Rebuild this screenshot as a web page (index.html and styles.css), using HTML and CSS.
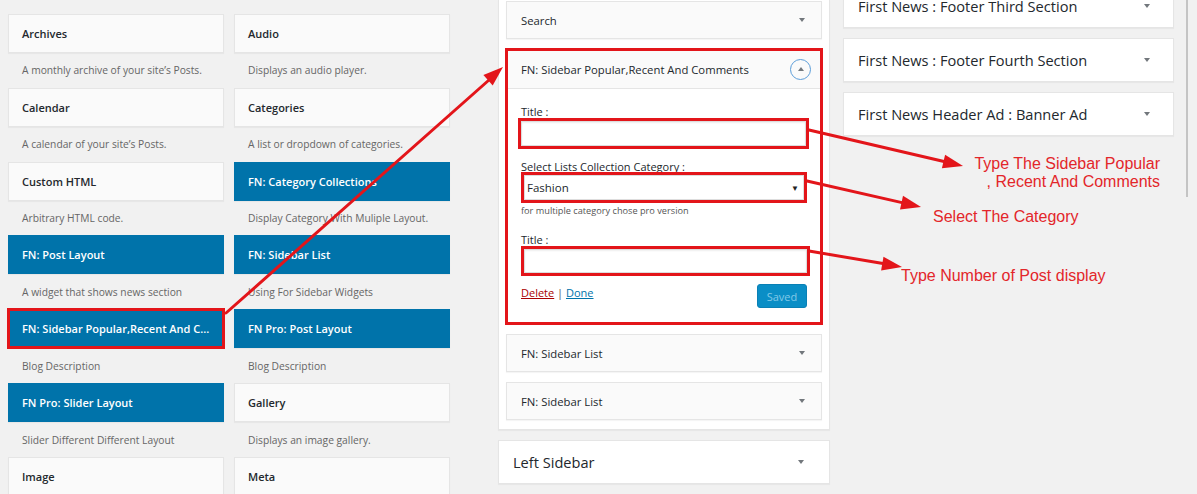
FILE: index.html
```html
<!DOCTYPE html>
<html>
<head>
<meta charset="utf-8">
<title>Widgets</title>
<link rel="stylesheet" href="styles.css">
</head>
<body>
<div class="page">
  <div class="available">
    <div class="item"><div class="card">Archives</div><div class="desc">A monthly archive of your site’s Posts.</div></div>
    <div class="item"><div class="card">Audio</div><div class="desc">Displays an audio player.</div></div>
    <div class="item"><div class="card">Calendar</div><div class="desc">A calendar of your site’s Posts.</div></div>
    <div class="item"><div class="card">Categories</div><div class="desc">A list or dropdown of categories.</div></div>
    <div class="item"><div class="card">Custom HTML</div><div class="desc">Arbitrary HTML code.</div></div>
    <div class="item"><div class="card blue">FN: Category Collections</div><div class="desc">Display Category With Muliple Layout.</div></div>
    <div class="item"><div class="card blue">FN: Post Layout</div><div class="desc">A widget that shows news section</div></div>
    <div class="item"><div class="card blue">FN: Sidebar List</div><div class="desc">Using For Sidebar Widgets</div></div>
    <div class="item"><div class="card blue marked">FN: Sidebar Popular,Recent And C...</div><div class="desc">Blog Description</div></div>
    <div class="item"><div class="card blue">FN Pro: Post Layout</div><div class="desc">Blog Description</div></div>
    <div class="item"><div class="card blue">FN Pro: Slider Layout</div><div class="desc">Slider Different Different Layout</div></div>
    <div class="item"><div class="card">Gallery</div><div class="desc">Displays an image gallery.</div></div>
    <div class="item"><div class="card">Image</div><div class="desc"></div></div>
    <div class="item"><div class="card">Meta</div><div class="desc"></div></div>
  </div>

  <div class="sidebar-col">
    <div class="sidebar-open">
      <div class="w">
        <div class="w-top"><span>Search</span><span class="tri"></span></div>
      </div>
      <div class="w expanded marked">
        <div class="w-top head"><span>FN: Sidebar Popular,Recent And Comments</span><span class="circle"><span class="tri up"></span></span></div>
        <div class="w-body">
          <div class="lbl">Title :</div>
          <div class="field boxed"></div>
          <div class="lbl gap1">Select Lists Collection Category :</div>
          <div class="select boxed"><span>Fashion</span><span class="caret">▼</span></div>
          <div class="help">for multiple category chose pro version</div>
          <div class="lbl gap2">Title :</div>
          <div class="field field2 boxed"></div>
          <div class="actions">
            <div class="links"><span class="del">Delete</span> <span class="sep">|</span> <span class="done">Done</span></div>
            <div class="saved">Saved</div>
          </div>
        </div>
      </div>
      <div class="w">
        <div class="w-top"><span>FN: Sidebar List</span><span class="tri"></span></div>
      </div>
      <div class="w">
        <div class="w-top"><span>FN: Sidebar List</span><span class="tri"></span></div>
      </div>
    </div>
    <div class="sidebar-closed"><span>Left Sidebar</span><span class="tri"></span></div>
  </div>

  <div class="right-col">
    <div class="rcard"><span>First News : Footer Third Section</span><span class="tri"></span></div>
    <div class="rcard"><span>First News : Footer Fourth Section</span><span class="tri"></span></div>
    <div class="rcard"><span>First News Header Ad : Banner Ad</span><span class="tri"></span></div>
  </div>
</div>

<svg class="arrows" width="1197" height="494" viewBox="0 0 1197 494">
  <g stroke="#e3151a" stroke-width="3" fill="none" stroke-linecap="round">
    <line x1="226" y1="313" x2="489" y2="80"/>
    <line x1="809" y1="130" x2="944" y2="161.5"/>
    <line x1="807" y1="181" x2="902" y2="202.6"/>
    <line x1="809" y1="251" x2="883" y2="263.6"/>
  </g>
  <g fill="#e3151a">
    <polygon points="503,67 492.7,85.5 483.4,75"/>
    <polygon points="963,166 941.9,168.3 945.1,154.7"/>
    <polygon points="921,207 900,209.4 903,195.8"/>
    <polygon points="902,267 881.1,270.5 883.5,256.7"/>
  </g>
</svg>
<div class="note n1">Type The Sidebar Popular<br>, Recent And Comments</div>
<div class="note n2">Select The Category</div>
<div class="note n3">Type Number of Post display</div>
<div class="scrollbar"></div>
</body>
</html>
```

FILE: styles.css
```css
html, body {
  margin: 0;
  height: 494px;
  overflow: hidden;
}
body {
  background: #f1f1f1;
  font-family: "Open Sans", "Noto Sans", sans-serif;
  color: #23282d;
  position: relative;
}
.page {
  display: flex;
  align-items: flex-start;
}

/* available widgets */
.available {
  display: grid;
  grid-template-columns: 216px 216px;
  column-gap: 10px;
  padding: 14px 0 0 8px;
}
.card {
  box-sizing: border-box;
  height: 39px;
  border: 1px solid #e5e5e5;
  background: #fafafa;
  box-shadow: 0 1px 1px rgba(0,0,0,.04);
  display: flex;
  align-items: center;
  padding: 0 13px;
  font-size: 11px;
  font-weight: 600;
  white-space: nowrap;
  overflow: hidden;
}
.card.blue {
  background: #0073aa;
  border-color: #0073aa;
  color: #fff;
}
.desc {
  height: 34.83px;
  display: flex;
  align-items: center;
  padding-left: 14px;
  font-size: 10.25px;
  color: #666;
  white-space: nowrap;
}
.marked {
  outline: 3px solid #e3151a;
  outline-offset: -2px;
}
.boxed {
  outline: 3px solid #e3151a;
  outline-offset: 0;
}

/* middle sidebar */
.sidebar-col {
  margin-left: 48px;
  width: 332px;
}
.sidebar-open {
  background: #fff;
  border: 1px solid #e5e5e5;
  border-top: none;
  box-shadow: 0 1px 1px rgba(0,0,0,.04);
  padding: 1px 7px 9px 7px;
}
.w {
  border: 1px solid #e5e5e5;
  background: #fafafa;
  box-shadow: 0 1px 1px rgba(0,0,0,.04);
}
.w + .w {
  margin-top: 10px;
}
.w-top {
  height: 36px;
  display: flex;
  align-items: center;
  justify-content: space-between;
  padding: 0 16px 0 14px;
  font-size: 11.3px;
}
.w-top.head {
  height: 38px;
  border-bottom: 1px solid #e5e5e5;
  padding-right: 10px;
}
.expanded .w-body {
  background: #fff;
  padding: 16px 15px 15px 14px;
}
.circle {
  width: 21px;
  height: 21px;
  box-sizing: border-box;
  border: 1px solid #5b9dd9;
  border-radius: 50%;
  display: flex;
  align-items: center;
  justify-content: center;
}
.tri {
  width: 0;
  height: 0;
  border-left: 3.5px solid transparent;
  border-right: 3.5px solid transparent;
  border-top: 4px solid #72777c;
}
.tri.up {
  border-top: none;
  border-bottom: 4px solid #72777c;
  margin-top: -1px;
}
.lbl {
  font-size: 11px;
  line-height: 14px;
  height: 14px;
}
.lbl.gap1 {
  margin-top: 14px;
}
.lbl.gap2 {
  margin-top: 16px;
}
.field {
  box-sizing: border-box;
  margin: 2px 0 0 0;
  width: 285px;
  height: 25px;
  border: 1px solid #ddd;
  background: #fff;
  box-shadow: inset 0 1px 2px rgba(0,0,0,.07);
}
.field.field2 {
  margin-left: 3px;
  width: 283px;
  height: 24px;
}
.select {
  box-sizing: border-box;
  margin: 1px 0 0 3px;
  width: 280px;
  height: 25px;
  border: 1px solid #ddd;
  background: #fff;
  display: flex;
  align-items: center;
  justify-content: space-between;
  padding: 0 4px 0 2px;
  font-size: 11.5px;
}
.caret {
  font-size: 8px;
  color: #222;
}
.help {
  margin-top: 5px;
  font-size: 9.2px;
  line-height: 12px;
  height: 12px;
  color: #555;
  white-space: nowrap;
}
.actions {
  margin-top: 11px;
  display: flex;
  justify-content: space-between;
  align-items: flex-start;
}
.links {
  font-size: 11px;
  line-height: 18px;
}
.del {
  color: #a00;
  text-decoration: underline;
}
.sep {
  color: #555;
}
.done {
  color: #0073aa;
  text-decoration: underline;
}
.saved {
  box-sizing: border-box;
  width: 50px;
  height: 24px;
  margin-right: -1px;
  border: 1px solid #0a80b5;
  border-radius: 3px;
  background: #0a8ec6;
  color: #82c9e8;
  font-size: 11px;
  display: flex;
  align-items: center;
  justify-content: center;
}
.sidebar-closed {
  margin-top: 10px;
  box-sizing: border-box;
  height: 44px;
  background: #fff;
  border: 1px solid #e5e5e5;
  box-shadow: 0 1px 1px rgba(0,0,0,.04);
  display: flex;
  align-items: center;
  justify-content: space-between;
  padding: 0 25px 0 14px;
  font-size: 14.6px;
}

/* right column */
.right-col {
  margin-left: 13px;
  width: 331px;
  margin-top: -16px;
}
.rcard {
  box-sizing: border-box;
  height: 44px;
  margin-bottom: 10px;
  background: #fff;
  border: 1px solid #e5e5e5;
  box-shadow: 0 1px 1px rgba(0,0,0,.04);
  display: flex;
  align-items: center;
  justify-content: space-between;
  padding: 0 23px 0 14px;
  font-size: 14.6px;
}

/* annotations */
.arrows {
  position: absolute;
  left: 0;
  top: 0;
  pointer-events: none;
}
.note {
  position: absolute;
  font-family: "Liberation Sans", Arial, sans-serif;
  font-size: 16px;
  line-height: 18px;
  color: #e3262a;
  white-space: nowrap;
}
.n1 {
  top: 155px;
  right: 37px;
  text-align: right;
}
.n2 {
  top: 208px;
  left: 933px;
}
.n3 {
  top: 267px;
  left: 901px;
}
.scrollbar {
  position: absolute;
  left: 1186px;
  top: 0;
  width: 2px;
  height: 197px;
  background: #c4c4c4;
}
```
